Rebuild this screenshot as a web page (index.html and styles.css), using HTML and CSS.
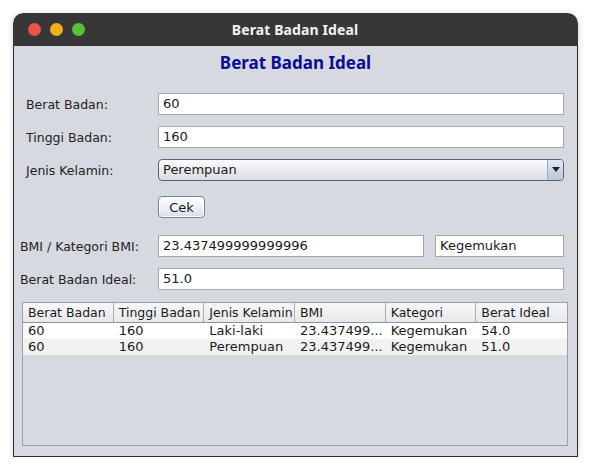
FILE: index.html
```html
<!DOCTYPE html>
<html>
<head>
<meta charset="utf-8">
<link rel="stylesheet" href="styles.css">
</head>
<body>
<div class="window">
  <div class="titlebar">
    <div class="lights">
      <span class="light red"></span>
      <span class="light yellow"></span>
      <span class="light green"></span>
    </div>
    <div class="title">Berat Badan Ideal</div>
  </div>
  <div class="content">
    <h1 class="heading">Berat Badan Ideal</h1>
    <div class="form form-top">
      <div class="row">
        <label class="label">Berat Badan:</label>
        <div class="field">60</div>
      </div>
      <div class="row">
        <label class="label">Tinggi Badan:</label>
        <div class="field">160</div>
      </div>
      <div class="row">
        <label class="label">Jenis Kelamin:</label>
        <div class="combo">
          <span class="combo-text">Perempuan</span>
          <span class="combo-btn"><svg width="8" height="6" viewBox="0 0 8 6"><path d="M0 0H8L4 5Z" fill="#222"/></svg></span>
        </div>
      </div>
      <div class="row row-btn">
        <span class="label"></span>
        <button class="btn">Cek</button>
      </div>
    </div>
    <div class="form form-bottom">
      <div class="row">
        <label class="label">BMI / Kategori BMI:</label>
        <div class="pair">
          <div class="field field-bmi">23.437499999999996</div>
          <div class="field field-cat">Kegemukan</div>
        </div>
      </div>
      <div class="row">
        <label class="label">Berat Badan Ideal:</label>
        <div class="field">51.0</div>
      </div>
    </div>
    <div class="table">
      <div class="thead">
        <div class="th">Berat Badan</div>
        <div class="th">Tinggi Badan</div>
        <div class="th">Jenis Kelamin</div>
        <div class="th">BMI</div>
        <div class="th">Kategori</div>
        <div class="th">Berat Ideal</div>
      </div>
      <div class="tr">
        <div class="td">60</div>
        <div class="td">160</div>
        <div class="td">Laki-laki</div>
        <div class="td">23.437499...</div>
        <div class="td">Kegemukan</div>
        <div class="td">54.0</div>
      </div>
      <div class="tr alt">
        <div class="td">60</div>
        <div class="td">160</div>
        <div class="td">Perempuan</div>
        <div class="td">23.437499...</div>
        <div class="td">Kegemukan</div>
        <div class="td">51.0</div>
      </div>
    </div>
  </div>
</div>
</body>
</html>
```

FILE: styles.css
```css
* { box-sizing: border-box; }
html, body { margin: 0; padding: 0; background: #ffffff; }
body { font-family: "DejaVu Sans", sans-serif; font-size: 13px; color: #1a1a1a; }

.window {
  margin: 13px 0 0 13px;
  width: 565px;
  height: 444px;
  border-radius: 10px 10px 0 0;
  background: #d6d9e0;
  box-shadow: 0 1px 6px rgba(0,0,0,0.18);
  display: flex;
  flex-direction: column;
  overflow: hidden;
}

.titlebar {
  height: 33px;
  background: #373737;
  display: flex;
  align-items: center;
  position: relative;
  border-radius: 10px 10px 0 0;
}
.lights { display: flex; gap: 9px; padding-left: 15px; }
.light { width: 13px; height: 13px; border-radius: 50%; display: block; }
.red { background: #ec5250; }
.yellow { background: #f3ae1b; }
.green { background: #56c434; }
.title {
  flex: 1;
  text-align: center;
  color: #f2f2f2;
  font-family: "Noto Sans", "Open Sans", sans-serif;
  font-weight: 700;
  font-size: 14px;
  margin-right: 73px;
  letter-spacing: 0.1px;
}

.content {
  flex: 1;
  border: 1px solid #2e2e2e;
  border-top: none;
  display: flex;
  flex-direction: column;
  padding: 0 0 10px 0;
}

.heading {
  margin: 7px 0 0 0;
  height: 20px;
  line-height: 20px;
  text-align: center;
  font-family: "Noto Sans", "Open Sans", sans-serif;
  font-weight: 700;
  font-size: 17px;
  color: #0c0c96;
}

.form { display: flex; flex-direction: column; gap: 11px; padding-right: 13px; }
.form-top { margin-top: 20px; padding-left: 12px; }
.form-bottom { margin-top: 17px; padding-left: 6px; }
.row { display: flex; align-items: center; height: 22px; }
.form-top .label { width: 132px; flex: none; }
.form-bottom .label { width: 138px; flex: none; }
.label { font-size: 12.5px; color: #222; }
.row-btn { margin-top: 4px; }

.field {
  flex: 1;
  height: 22px;
  background: #fff;
  border: 1px solid #a3a6ab;
  padding: 0 4px;
  line-height: 20px;
  font-size: 13px;
  color: #1a1a1a;
}
.pair { flex: 1; display: flex; gap: 11px; }
.field-bmi { flex: none; width: 266px; }
.field-cat { flex: 1; }

.combo {
  flex: 1;
  height: 22px;
  border: 1px solid #5b6371;
  border-radius: 4px;
  background: linear-gradient(#fbfbfc, #e6e8ec 60%, #dadde3);
  display: flex;
  overflow: hidden;
}
.combo-text { flex: 1; padding-left: 4px; line-height: 20px; }
.combo-btn {
  width: 16px;
  border-left: 1px solid #9aa6b5;
  background: linear-gradient(#dfe7f1, #b9c8da);
  display: flex;
  align-items: center;
  justify-content: center;
}

.btn {
  width: 47px;
  height: 22px;
  border: 1px solid #6b88ad;
  border-radius: 4px;
  background: linear-gradient(#ffffff, #eceef1 60%, #d9dce2);
  font-family: "DejaVu Sans", sans-serif;
  font-size: 13px;
  color: #1a1a1a;
  padding: 0;
  box-shadow: inset 0 0 0 1px #ffffff;
}

.table {
  margin: 12px 9px 0 8px;
  flex: 1;
  border: 1px solid #9b9fa6;
  display: flex;
  flex-direction: column;
}
.thead {
  display: grid;
  grid-template-columns: repeat(6, 1fr);
  height: 20px;
  background: linear-gradient(#f7f7f8, #e7e8eb);
  border-bottom: 1px solid #8e939b;
}
.th {
  padding-left: 5px;
  line-height: 19px;
  font-size: 12.5px;
  border-right: 1px solid #a9adb4;
  white-space: nowrap;
  overflow: hidden;
}
.th:last-child { border-right: none; }
.tr {
  display: grid;
  grid-template-columns: repeat(6, 1fr);
  height: 16px;
  background: #ffffff;
}
.tr.alt { background: #f2f2f2; }
.td { padding-left: 5px; line-height: 16px; font-size: 13px; white-space: nowrap; overflow: hidden; }
```
